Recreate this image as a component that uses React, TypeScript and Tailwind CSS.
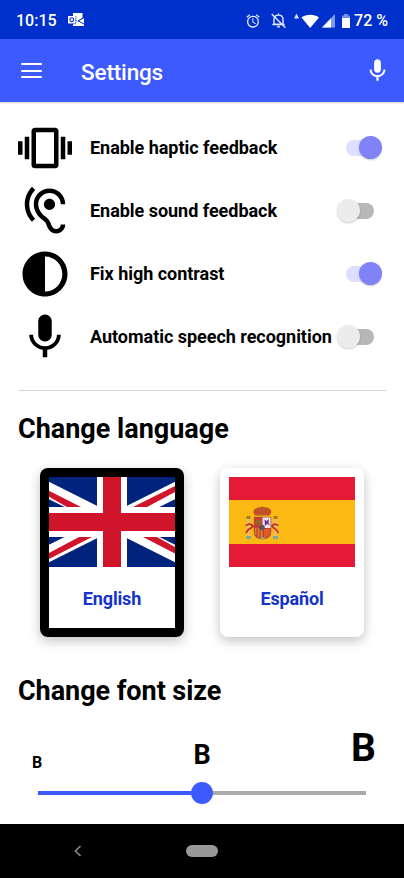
import React, { useState } from 'react';

const MIC =
  'M12 14c1.66 0 2.99-1.34 2.99-3L15 5c0-1.66-1.34-3-3-3S9 3.34 9 5v6c0 1.66 1.34 3 3 3zm5.3-3c0 3-2.54 5.1-5.3 5.1S6.7 14 6.7 11H5c0 3.41 2.72 6.23 6 6.72V21h2v-3.28c3.28-.48 6-3.3 6-6.72h-1.7z';
const VIBRATION =
  'M0 15h2V9H0v6zm3 2h2V7H3v10zm19-8v6h2V9h-2zm-3 8h2V7h-2v10zM16.5 3h-9C6.67 3 6 3.67 6 4.5v15c0 .83.67 1.5 1.5 1.5h9c.83 0 1.5-.67 1.5-1.5v-15c0-.83-.67-1.5-1.5-1.5zM16 19H8V5h8v14z';
const HEARING =
  'M17 20c-.29 0-.56-.06-.76-.15-.71-.37-1.21-.88-1.71-2.38-.51-1.56-1.47-2.29-2.39-3-.79-.61-1.61-1.24-2.32-2.53C9.29 10.98 9 9.93 9 9c0-2.8 2.2-5 5-5s5 2.2 5 5h2c0-3.93-3.07-7-7-7S7 5.07 7 9c0 1.26.38 2.65 1.07 3.9.91 1.65 1.98 2.48 2.85 3.15.81.62 1.39 1.07 1.71 2.05.6 1.82 1.37 2.84 2.73 3.55.51.23 1.07.35 1.64.35 2.21 0 4-1.79 4-4h-2c0 1.1-.9 2-2 2zM7.64 2.64L6.22 1.22C4.23 3.21 3 5.96 3 9s1.23 5.79 3.22 7.78l1.41-1.41C6.01 13.74 5 11.49 5 9s1.01-4.74 2.64-6.36zM11.5 9c0 1.38 1.12 2.5 2.5 2.5s2.5-1.12 2.5-2.5-1.12-2.5-2.5-2.5-2.5 1.12-2.5 2.5z';
const CONTRAST =
  'M12 22c5.52 0 10-4.48 10-10S17.52 2 12 2 2 6.48 2 12s4.48 10 10 10zm0-17.8c4.3 0 7.7 3.5 7.7 7.8s-3.4 7.8-7.7 7.8V4.2z';

function Glyph({ d, className }: { d: string; className: string }) {
  return (
    <svg viewBox="0 0 24 24" fill="currentColor" className={className}>
      <path d={d} />
    </svg>
  );
}

function StatusBar() {
  return (
    <div className="flex h-[39px] items-center bg-[#0030cb] pl-4 pr-4 pt-0.5 text-white">
      <span className="text-[16px] font-medium leading-5">10:15</span>
      <svg viewBox="0 0 17 14" className="mb-px ml-[11px] h-[14px] w-[17px]">
        <path d="M5 0h9.500v5L10 8.500 5 5z" fill="#fff" />
        <path d="M5 6l5 2.500L16 5v8H5z" fill="#fff" />
        <rect x="0" y="3" width="7.500" height="7.500" fill="#fff" />
        <path d="M7.800 3v7.800H4" fill="none" stroke="#0030cb" strokeWidth=".6" />
        <circle cx="3.800" cy="6.700" r="1.900" fill="none" stroke="#0030cb" strokeWidth="1.100" />
        <path d="M16.500 4.300L10 7.800l6.500 3.500" fill="none" stroke="#0030cb" strokeWidth="1" />
      </svg>
      <div className="ml-auto flex items-center">
        <svg viewBox="0 0 24 24" fill="#dfe7ff" className="h-4 w-4">
          <path d="M22 5.720l-4.600-3.860-1.290 1.530 4.600 3.860L22 5.720zM7.880 3.390L6.600 1.860 2 5.710l1.290 1.530 4.590-3.850zM12.500 8H11v6l4.750 2.850.75-1.230-4-2.370V8zM12 4c-4.970 0-9 4.030-9 9s4.020 9 9 9a9 9 0 0 0 0-18zm0 16c-3.870 0-7-3.130-7-7s3.130-7 7-7 7 3.130 7 7-3.130 7-7 7z" />
        </svg>
        <svg viewBox="0 0 18 18" className="ml-[9px] h-[17px] w-[17px]" fill="none" stroke="#dfe7ff" strokeWidth="1.500">
          <path d="M4.200 13V8c0-3 2-4.700 4.800-4.700s4.800 1.700 4.800 4.700v5zM2.500 13.200h13M9 1.500v2" />
          <path d="M7.500 15.500h3" strokeWidth="1.800" />
          <path d="M1.800 2.200l14.500 14.500" />
        </svg>
        <svg viewBox="0 0 25 16" className="ml-[7px] h-4 w-[25px]" fill="#fff">
          <path d="M0 5.500L2.500 0.500 5 5.500z" opacity=".85" />
          <path d="M7.500 4.500C12 .700 20.500.700 25 4.500L16.200 15z" />
        </svg>
        <svg viewBox="0 0 13 14" className="ml-[3px] h-[14px] w-[13px]">
          <path d="M0 13.500L13 0v13.500z" fill="#809bed" />
          <path d="M0 13.500L9 4.200v9.300z" fill="#fff" />
        </svg>
        <svg viewBox="0 0 8 16" className="ml-[7px] h-4 w-2">
          <path d="M2 1h4v1.500h2v4H0v-4h2z" fill="#7892e8" />
          <path d="M0 5h8v10H0z" fill="#fff" />
        </svg>
        <span className="ml-1 text-[16px] font-medium leading-5">72 %</span>
      </div>
    </div>
  );
}

function Toggle({ on, onChange }: { on: boolean; onChange: () => void }) {
  return (
    <button
      role="switch"
      aria-checked={on}
      onClick={onChange}
      className={`relative flex h-6 w-[45px] items-center ${on ? 'justify-end' : 'justify-start'}`}
    >
      <span
        className={`absolute left-[9px] top-1 h-4 w-7 rounded-full ${on ? 'bg-[#dcdffe]' : 'bg-[#b7b7b7]'}`}
      />
      <span
        className={`relative h-[23px] w-[23px] rounded-full shadow-[0_1px_2px_rgba(0,0,0,0.2)] ${on ? 'bg-[#8083f8]' : 'bg-[#ececec]'}`}
      />
    </button>
  );
}

function UnionJack() {
  return (
    <svg viewBox="0 0 126 90" className="block h-[90px] w-[126px]">
      <path fill="#00247d" d="M0 0h126v90H0z" />
      <path d="M-27 0L153 90M153 0L-27 90" stroke="#fff" strokeWidth="15.500" />
      <g fill="#cf142b">
        <path d="M0 13.700v6L18 30h14z" />
        <path d="M126 9v6L98 30H84z" />
        <path d="M0 76v6L43 60H30z" />
        <path d="M126 70v6.500L94 60h13.700z" />
      </g>
      <path d="M63 0v90M0 45h126" stroke="#fff" strokeWidth="30" />
      <path d="M63 0v90M0 45h126" stroke="#cf142b" strokeWidth="18" />
    </svg>
  );
}

function SpanishFlag() {
  return (
    <svg viewBox="0 0 126 90" className="block h-[90px] w-[126px]">
      <path fill="#e51a37" d="M0 0h126v90H0z" />
      <path fill="#fdb913" d="M0 23h126v44H0z" />
      <g>
        <path d="M18 42h3v18h-3zM45 42h3v18h-3z" fill="#e3bd70" />
        <path d="M17.500 39h4v3h-4zM44.500 39h4v3h-4z" fill="#a77a25" />
        <path d="M17 59h5v3h-5zM44 59h5v3h-5z" fill="#7fa99a" />
        <path d="M16.500 48.500l4-1.500 4.500 2-6 4-2 3M49.500 48.500l-4-1.500-3 2 5 4 2 3" fill="none" stroke="#c5302c" strokeWidth="1.800" />
        <path d="M26 38.500c-4-5 0-8.500 7.500-8.500s11 3.500 7 8.500z" fill="#cc4a2a" />
        <path d="M25 34q8-5 16.500 0M26.500 37.500h13M33.300 29v9" fill="none" stroke="#a76920" strokeWidth="1" />
        <path d="M25 40h17v15q0 7-8.500 7T25 55z" fill="#c83e2e" stroke="#987343" strokeWidth=".6" />
        <path d="M33.500 40.500h8V51h-8z" fill="#f1e6ee" />
        <path d="M35.500 42.500l2 1.500 2.500-2-.5 4 1.500 2.500-3-1.500-2 2z" fill="#6d3390" />
        <path d="M26 51h7.500v10q-7-1-7.500-5z" fill="#dc842c" />
        <path d="M28 51v8M31 51v10" stroke="#b62b2c" />
        <path d="M35 52h6v4q-1 4-6 5z" fill="#dc5a2d" />
        <path d="M27 43h5v5h-5z" fill="#956431" />
        <circle cx="33" cy="50.500" r="2.800" fill="#62505a" />
        <path d="M31.500 60h4v2h-4z" fill="#929f72" />
      </g>
    </svg>
  );
}

function SettingRow({ icon, label, initial }: { icon: string; label: string; initial: boolean }) {
  const [on, setOn] = useState(initial);
  return (
    <div className="flex h-[63px] items-center">
      <Glyph d={icon} className="h-[54px] w-[54px] shrink-0" />
      <span className="ml-[18px] whitespace-nowrap pt-px text-[18px] font-bold leading-6 tracking-[-0.03px]">{label}</span>
      <div className="ml-auto mr-1">
        <Toggle on={on} onChange={() => setOn(!on)} />
      </div>
    </div>
  );
}

export default function App() {
  return (
    <div className="flex h-[878px] w-[404px] flex-col overflow-hidden bg-white font-['Roboto',sans-serif] text-black">
      <StatusBar />
      <header className="z-10 flex h-[63px] shrink-0 items-center bg-[#3d5afe] pl-[21px] pr-[13px] text-white shadow-[0_1px_2px_rgba(0,0,0,0.2)]">
        <div className="flex flex-col gap-[4.500px]">
          <span className="h-0.5 w-[21px] rounded-full bg-white" />
          <span className="h-0.5 w-[21px] rounded-full bg-white" />
          <span className="h-0.5 w-[21px] rounded-full bg-white" />
        </div>
        <h1 className="ml-[39px] pt-0.5 text-[22.500px] font-medium leading-7 tracking-[-0.15px]">Settings</h1>
        <Glyph d={MIC} className="ml-auto h-[27px] w-[27px]" />
      </header>

      <main className="flex-1 px-[18px] pt-3.5">
        <section>
          <SettingRow icon={VIBRATION} label="Enable haptic feedback" initial={true} />
          <SettingRow icon={HEARING} label="Enable sound feedback" initial={false} />
          <SettingRow icon={CONTRAST} label="Fix high contrast" initial={true} />
          <SettingRow icon={MIC} label="Automatic speech recognition" initial={false} />
        </section>

        <hr className="mt-[22px] border-t border-[#d5d5d5]" />

        <h2 className="mt-[22px] text-[27px] font-bold leading-8">Change language</h2>
        <div className="mt-[23px] flex gap-9 pl-[22px]">
          <button className="flex h-[169px] w-36 flex-col rounded-lg bg-black p-[9px] shadow-[0_4px_12px_rgba(0,0,0,0.24)]">
            <UnionJack />
            <span className="flex w-full flex-1 items-center justify-center bg-white pt-px text-[18px] font-bold tracking-[-0.15px] text-[#1433c8]">
              English
            </span>
          </button>
          <button className="flex h-[169px] w-36 flex-col rounded-lg bg-white p-[9px] shadow-[0_4px_12px_rgba(0,0,0,0.24)]">
            <SpanishFlag />
            <span className="flex w-full flex-1 items-center justify-center pt-px text-[18px] font-bold tracking-[-0.15px] text-[#1433c8]">
              Español
            </span>
          </button>
        </div>

        <h2 className="mt-[38px] text-[27px] font-bold leading-8 tracking-[-0.05px]">Change font size</h2>
        <div className="mt-[21px] flex h-10 items-start justify-between pl-3.5 pr-2.5 font-bold">
          <span className="w-[21px] pt-[25px] text-[16px] leading-5">B</span>
          <span className="pt-[11px] text-[27px] leading-8">B</span>
          <span className="text-[39px] leading-10">B</span>
        </div>
        <div className="ml-5 mt-[14px] flex h-[22px] w-[328px] items-center">
          <span className="h-1 w-[153px] bg-[#3d5afe]" />
          <span className="h-[22px] w-[22px] rounded-full bg-[#3d5afe]" />
          <span className="h-1 flex-1 bg-[#aaa]" />
        </div>
      </main>

      <nav className="grid h-[54px] shrink-0 grid-cols-[186px_32px_1fr] items-center bg-black">
        <svg viewBox="0 0 8 12" className="ml-[74px] h-3 w-2" fill="none" stroke="#858585" strokeWidth="1.700">
          <path d="M6.500 1L1.500 6l5 5" />
        </svg>
        <span className="h-3 rounded-full bg-[#999]" />
      </nav>
    </div>
  );
}
